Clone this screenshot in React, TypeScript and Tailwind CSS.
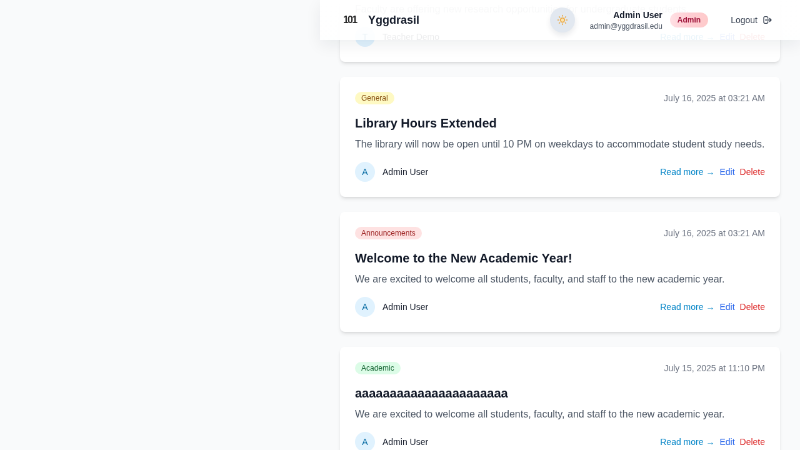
import React from "react";

type Post = {
  category: string;
  badge: string;
  date: string;
  title: string;
  body: string;
  author: string;
};

const posts: Post[] = [
  {
    category: "Research",
    badge: "bg-blue-100 text-blue-800",
    date: "July 16, 2025 at 03:21 AM",
    title: "New Research Opportunities",
    body: "Faculty are offering new research opportunities for undergraduate students.",
    author: "Teacher Demo",
  },
  {
    category: "General",
    badge: "bg-[#fef9c3] text-[#854d0e]",
    date: "July 16, 2025 at 03:21 AM",
    title: "Library Hours Extended",
    body: "The library will now be open until 10 PM on weekdays to accommodate student study needs.",
    author: "Admin User",
  },
  {
    category: "Announcements",
    badge: "bg-[#fee2e2] text-[#991b1b]",
    date: "July 16, 2025 at 03:21 AM",
    title: "Welcome to the New Academic Year!",
    body: "We are excited to welcome all students, faculty, and staff to the new academic year.",
    author: "Admin User",
  },
  {
    category: "Academic",
    badge: "bg-[#dcfce7] text-[#166534]",
    date: "July 15, 2025 at 11:10 PM",
    title: "aaaaaaaaaaaaaaaaaaaaaa",
    body: "We are excited to welcome all students, faculty, and staff to the new academic year.",
    author: "Admin User",
  },
];

function Card({ post }: { post: Post }) {
  return (
    <article className="h-48 shrink-0 rounded-lg bg-white p-6 shadow-md">
      <div className="mb-4 flex h-5 items-center justify-between">
        <span className={`rounded-full px-2.5 py-0.5 text-xs ${post.badge}`}>{post.category}</span>
        <span className="text-sm text-[#6b7280]">{post.date}</span>
      </div>
      <h2 className="mb-2 text-xl font-bold text-[#111827]">{post.title}</h2>
      <p className="mb-4 text-base whitespace-nowrap text-[#4b5563]">{post.body}</p>
      <div className="flex h-8 items-center justify-between text-sm">
        <div className="flex items-center gap-3">
          <span className="flex size-8 items-center justify-center rounded-full bg-[#e0f2fe] text-[#0369a1]">
            {post.author[0]}
          </span>
          <span className="text-[#111827]">{post.author}</span>
        </div>
        <div className="flex gap-2">
          <span className="text-[#0284c7]">Read more →</span>
          <span className="text-[#2563eb]">Edit</span>
          <span className="text-[#dc2626]">Delete</span>
        </div>
      </div>
    </article>
  );
}

function Sun() {
  return (
    <svg className="size-[18px]" viewBox="0 0 24 24" fill="none" stroke="#eba63c" strokeWidth="2" strokeLinecap="round">
      <circle cx="12" cy="12" r="4.5" fill="#fbe3b0" />
      <path d="M12 2v2M12 20v2M2 12h2M20 12h2M4.9 4.9l1.4 1.4M17.7 17.7l1.4 1.4M4.9 19.1l1.4-1.4M17.7 6.3l1.4-1.4" />
    </svg>
  );
}

function LogoutIcon() {
  return (
    <svg className="size-4" viewBox="0 0 24 24" fill="none" stroke="currentColor" strokeWidth="2" strokeLinecap="round" strokeLinejoin="round">
      <path d="M17 16l4-4m0 0l-4-4m4 4H7m6 4v1a3 3 0 01-3 3H6a3 3 0 01-3-3V7a3 3 0 013-3h4a3 3 0 013 3v1" />
    </svg>
  );
}

export default function App() {
  return (
    <div className="h-[450px] w-[800px] overflow-hidden bg-[#f9fafb] font-['Liberation_Sans',Arial,sans-serif]">
      <div className="relative h-[720px] w-[1280px] origin-top-left scale-[0.625] overflow-hidden bg-[#f9fafb] will-change-transform">
        <main className="-mt-[93px] ml-[512px] flex flex-col gap-6 px-8">
          {posts.map((post) => (
            <Card key={post.title} post={post} />
          ))}
        </main>
        <header className="absolute top-0 left-[512px] flex h-16 w-[768px] items-center justify-between bg-gradient-to-b from-white/98 to-white/91 pr-11 pl-[37px] shadow-[0_8px_26px_rgba(15,23,42,0.07)]">
          <div className="flex items-center">
            <span className="w-10 text-base font-bold tracking-[-1.8px] text-[#262626]">101</span>
            <span className="text-lg font-bold text-[#111827]">Yggdrasil</span>
          </div>
          <div className="flex items-center">
            <span className="mr-6 flex size-10 items-center justify-center rounded-full bg-[#e2e8f0] shadow-[0_5px_10px_rgba(15,23,42,0.09)]">
              <Sun />
            </span>
            <div className="mr-3 text-right">
              <div className="text-sm font-bold text-[#111827]">Admin User</div>
              <div className="text-xs text-[#4b5563]">admin@yggdrasil.edu</div>
            </div>
            <span className="mr-9 rounded-full bg-gradient-to-r from-[#ffe0e4] via-[#fecdd3] to-[#fecaca] px-3 py-1 text-xs font-bold text-[#9f1239]">
              Admin
            </span>
            <span className="flex items-center gap-2 text-sm text-[#374151]">
              Logout
              <LogoutIcon />
            </span>
          </div>
        </header>
      </div>
    </div>
  );
}
